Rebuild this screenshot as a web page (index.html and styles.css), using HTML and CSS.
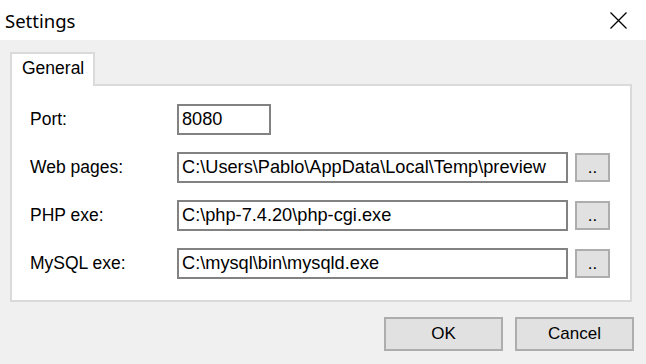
FILE: index.html
```html
<!DOCTYPE html>
<html>
<head>
<meta charset="utf-8">
<link rel="stylesheet" href="styles.css">
</head>
<body>
<div class="window">
  <div class="titlebar">
    <span class="title">Settings</span>
    <svg class="close" width="17" height="17" viewBox="0 0 17 17"><path d="M0.5 0.5L16.5 16.5M16.5 0.5L0.5 16.5" stroke="#000" stroke-width="1.3" fill="none"/></svg>
  </div>
  <div class="content">
    <div class="tabs"><div class="tab">General</div></div>
    <div class="panel">
      <div class="form">
        <div class="label">Port:</div>
        <div class="ctrl"><div class="field short">8080</div></div>
        <div class="label">Web pages:</div>
        <div class="ctrl"><div class="field long">C:\Users\Pablo\AppData\Local\Temp\preview</div><div class="browse">..</div></div>
        <div class="label">PHP exe:</div>
        <div class="ctrl"><div class="field long">C:\php-7.4.20\php-cgi.exe</div><div class="browse">..</div></div>
        <div class="label">MySQL exe:</div>
        <div class="ctrl"><div class="field long">C:\mysql\bin\mysqld.exe</div><div class="browse">..</div></div>
      </div>
    </div>
    <div class="actions">
      <div class="btn">OK</div>
      <div class="btn">Cancel</div>
    </div>
  </div>
</div>
</body>
</html>
```
FILE: styles.css
```css
html, body { margin: 0; padding: 0; }
body { width: 646px; height: 364px; overflow: hidden; font-family: "Liberation Sans", Arial, sans-serif; color: #000; }
.window { width: 646px; height: 364px; display: flex; flex-direction: column; }
.titlebar { height: 40px; background: #fff; display: flex; align-items: center; justify-content: space-between; padding: 0 19px 0 5px; box-sizing: border-box; }
.title { font-family: "Noto Sans", "Open Sans", sans-serif; font-size: 18.5px; line-height: 1; position: relative; top: 1px; }
.close { display: block; }
.content { flex: 1; background: #f0f0f0; padding: 12px 14px 0 10px; display: flex; flex-direction: column; }
.tabs { display: flex; height: 32px; }
.tab { width: 85px; box-sizing: border-box; height: 34px; background: #fff; border: 2px solid #dadada; border-bottom: none; font-size: 17.5px; padding-left: 10px; display: flex; align-items: center; position: relative; z-index: 1; padding-bottom: 3px; }
.panel { height: 218px; box-sizing: border-box; background: #fff; border: 2px solid #dadada; padding: 18px 0 0 18px; }
.form { display: grid; grid-template-columns: 147px auto; grid-auto-rows: 31px; row-gap: 17px; }
.label { font-size: 17.5px; display: flex; align-items: center; }
.ctrl { display: flex; align-items: center; gap: 7px; }
.field { height: 31px; box-sizing: border-box; border: 2px solid #828282; background: #fff; font-size: 18.2px; padding-left: 3px; display: flex; align-items: center; white-space: nowrap; overflow: hidden; }
.short { width: 94px; }
.long { width: 391px; }
.browse { width: 35px; height: 29px; box-sizing: border-box; background: #e1e1e1; border: 2px solid #adadad; font-size: 17px; display: flex; align-items: center; justify-content: center; }
.actions { display: flex; justify-content: flex-end; gap: 12px; margin-top: 15px; margin-right: -2px; }
.btn { width: 119px; height: 34px; box-sizing: border-box; background: #e1e1e1; border: 2px solid #adadad; font-size: 17px; display: flex; align-items: center; justify-content: center; }
```
